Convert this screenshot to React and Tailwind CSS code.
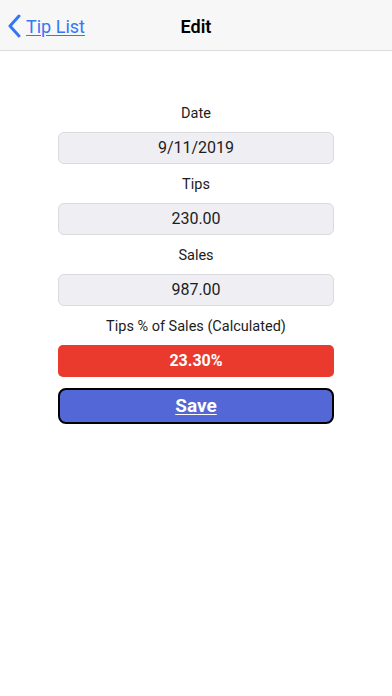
export default function App() {
  const font = { fontFamily: 'Roboto, "Liberation Sans", sans-serif' }

  const Field = ({ label, value }) => (
    <>
      <div className="h-[20px] pt-[3px] flex items-center justify-center text-[14.5px] text-[#1c1c1e]">{label}</div>
      <div className="mt-[10px] mb-[9px] h-[32px] rounded-[6px] border border-[#d9d9de] bg-[#efeff3] flex items-center justify-center text-[16px] text-[#1c1c1e]">
        {value}
      </div>
    </>
  )

  return (
    <div className="w-[392px] h-[696px] bg-white" style={font}>
      {/* Nav bar */}
      <div className="relative h-[51px] pt-[2px] bg-[#f7f7f7] border-b border-[#dcdcdc] flex items-center justify-center">
        <button className="absolute left-[7px] top-[2px] bottom-0 flex items-center gap-[5px] text-[#3478f6]">
          <svg width="14" height="24" viewBox="0 0 14 24" fill="none">
            <path d="M12 2 L3 12 L12 22" stroke="#3478f6" strokeWidth="3" strokeLinecap="round" strokeLinejoin="round" />
          </svg>
          <span className="text-[18px] underline underline-offset-2">Tip List</span>
        </button>
        <h1 className="text-[18px] font-semibold text-black">Edit</h1>
      </div>

      {/* Form */}
      <div className="w-[276px] mx-auto pt-[51px] flex flex-col">
        <Field label="Date" value="9/11/2019" />
        <Field label="Tips" value="230.00" />
        <Field label="Sales" value="987.00" />
        <div className="h-[20px] pt-[3px] flex items-center justify-center text-[14.5px] text-[#1c1c1e]">Tips % of Sales (Calculated)</div>
        <div className="mt-[10px] h-[32px] rounded-[5px] bg-[#ea3a2e] flex items-center justify-center text-[16px] font-bold text-white">
          23.30%
        </div>
        <button className="mt-[11px] h-[36px] rounded-[8px] border-2 border-black bg-[#5367d6] flex items-center justify-center text-[19px] font-bold text-white underline underline-offset-2">
          Save
        </button>
      </div>
    </div>
  )
}
